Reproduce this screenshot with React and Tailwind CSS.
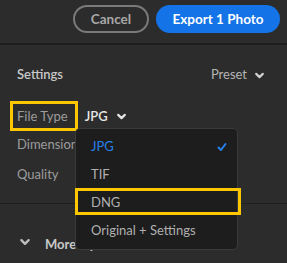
import React from "react";

function Chevron({ className }) {
  return (
    <svg viewBox="0 0 10 10" className={className} fill="none" stroke="currentColor" strokeWidth="2" strokeLinecap="round" strokeLinejoin="round">
      <path d="M2 3.5 L5 6.5 L8 3.5" />
    </svg>
  );
}

function Check({ className }) {
  return (
    <svg viewBox="0 0 10 10" className={className} fill="none" stroke="currentColor" strokeWidth="2" strokeLinecap="round" strokeLinejoin="round">
      <path d="M1.5 5.5 L4 8 L8.5 2" />
    </svg>
  );
}

const fileTypes = ["JPG", "TIF", "DNG", "Original + Settings"];

export default function App() {
  return (
    <div
      className="relative w-[287px] h-[263px] overflow-hidden bg-[#2c2c2c] text-[13px]"
      style={{ fontFamily: "Lato, 'Open Sans', sans-serif" }}
    >
      {/* header */}
      <div className="flex h-[43px] items-start justify-end gap-[7px] pt-[5px] pr-[7px]">
        <button className="h-[28px] w-[76px] rounded-full border-2 border-[#7a7a7a] text-[13.5px] font-bold text-[#a8a8a8]">
          Cancel
        </button>
        <button className="h-[28px] w-[124px] rounded-full bg-[#1473e6] text-[13.5px] font-bold text-white">
          Export 1 Photo
        </button>
      </div>
      <div className="h-[2px] bg-[#1e1e1e]" />

      {/* settings */}
      <div className="flex h-[58px] items-center justify-between pl-[17px] pr-[22px] pt-[2px]">
        <span className="font-semibold text-[#c8c8c8]">Settings</span>
        <span className="flex items-center gap-[7px] text-[#b4b4b4]">
          Preset
          <Chevron className="h-[11px] w-[11px] text-[#cfcfcf]" />
        </span>
      </div>

      <div className="flex h-[27px] items-center pl-[17px]">
        <span className="relative text-[#9c9c9c]">
          File Type
          <span className="absolute -left-[7px] -right-[10px] -top-[6px] -bottom-[5px] border-[3px] border-[#fdc700]" />
        </span>
        <span className="ml-[17px] flex items-center gap-[8px] font-semibold text-[#e6e6e6]">
          JPG
          <Chevron className="h-[11px] w-[11px]" />
        </span>
      </div>
      <div className="flex h-[30px] items-center pl-[17px] text-[#9c9c9c]">Dimensions</div>
      <div className="flex h-[29px] items-center pl-[17px] text-[#9c9c9c]">Quality</div>

      <div className="mt-[14px] h-[1px] bg-[#1f1f1f]" />

      <div className="flex h-[80px] items-start gap-[14px] pl-[19px] pt-[31px]">
        <Chevron className="mt-[1px] h-[12px] w-[12px] text-[#bdbdbd]" />
        <span className="font-bold text-[#c8c8c8]">More Options</span>
      </div>

      {/* dropdown */}
      <div className="absolute left-[75px] top-[128px] w-[163px] rounded-[5px] border border-[#3a3a3a] bg-[#1d1d1d] py-[4px]">
        {fileTypes.map((t, i) => (
          <div
            key={t}
            className={`relative flex h-[28px] items-center justify-between pl-[15px] pr-[10px] ${
              i === 0 ? "text-[#2680eb]" : "text-[#b0b0b0]"
            }`}
          >
            <span>{t}</span>
            {i === 0 && <Check className="h-[10px] w-[10px] text-[#2680eb]" />}
            {t === "DNG" && (
              <span className="absolute -left-[1px] -right-[4px] top-[-1px] bottom-[2px] border-[3px] border-[#fdc700]" />
            )}
          </div>
        ))}
      </div>
    </div>
  );
}
